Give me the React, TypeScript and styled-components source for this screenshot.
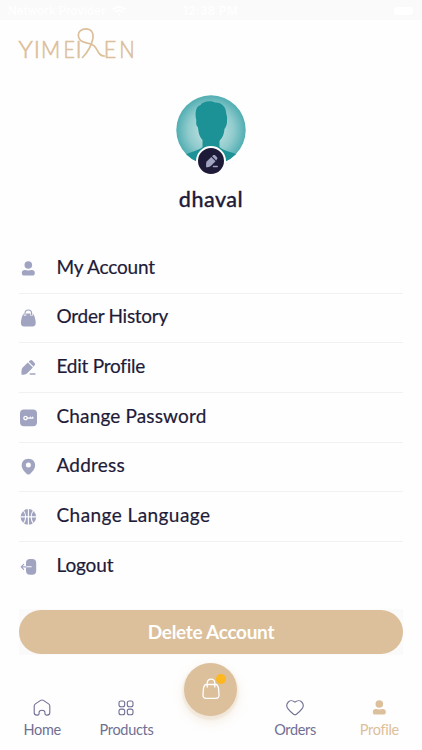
import React from 'react';
import styled, { createGlobalStyle } from 'styled-components';

const GlobalStyle = createGlobalStyle`
  * {
    box-sizing: border-box;
  }
  body {
    margin: 0;
    background: #fefefe;
    font-family: Lato, 'Liberation Sans', sans-serif;
  }
`;

const ink = '#1e1b39';
const lilac = '#a1a4c1';
const slate = '#6f6f94';
const gold = '#dcbf9b';

const Screen = styled.div`
  display: flex;
  flex-direction: column;
  width: 422px;
  height: 750px;
  overflow: hidden;
  background: #fefefe;
`;

const StatusBar = styled.div`
  display: grid;
  grid-template-columns: 1fr auto 1fr;
  align-items: center;
  height: 20px;
  padding: 2px 9px 0 8px;
  background: #fafafa;
  color: #ffffff;
  font-family: Inter, sans-serif;
  font-size: 11.5px;
  font-weight: 500;
  letter-spacing: 0.1px;
  white-space: nowrap;
`;

const Carrier = styled.div`
  display: flex;
  align-items: center;
  gap: 6px;
`;

const Clock = styled.span`
  font-weight: 600;
  letter-spacing: 0.5px;
`;

const Battery = styled.div`
  justify-self: end;
  width: 19px;
  height: 8px;
  border-radius: 3px;
  background: #ffffff;
`;

const Header = styled.header`
  height: 75px;
  padding: 4px 0 0 16px;
`;

const ProfileHead = styled.section`
  display: flex;
  flex-direction: column;
  align-items: center;
  height: 149px;
`;

const Avatar = styled.div`
  position: relative;
  width: 70px;
  height: 70px;
`;

const EditBadge = styled.button`
  position: absolute;
  left: 20px;
  top: 51px;
  display: flex;
  align-items: center;
  justify-content: center;
  width: 30px;
  height: 30px;
  padding: 0;
  border: 2px solid #ffffff;
  border-radius: 50%;
  background: ${ink};
`;

const Name = styled.h1`
  margin: 20px 0 0;
  color: ${ink};
  font-size: 21.5px;
  font-weight: 500;
  line-height: 28px;
  letter-spacing: 0.5px;
  -webkit-text-stroke: 0.3px ${ink};
`;

const Menu = styled.ul`
  margin: 0;
  padding: 0 19px;
  list-style: none;
`;

const MenuRow = styled.li`
  display: flex;
  align-items: center;
  height: 49.65px;
  border-bottom: 1px solid #f1f1f2;
  &:last-child {
    border-bottom: none;
  }
  svg {
    flex: none;
    margin: 1px 19.5px 0 0;
  }
`;

const MenuLabel = styled.span<{ spacing: number }>`
  padding-bottom: 3px;
  color: ${ink};
  font-size: 19px;
  line-height: 24px;
  letter-spacing: ${({ spacing }) => spacing}px;
  white-space: nowrap;
  -webkit-text-stroke: 0.2px ${ink};
`;

const DeleteWrap = styled.div`
  height: 46px;
  margin: 17.5px 19px 0;
  padding-top: 1px;
  background: #fafafa;
`;

const DeleteButton = styled.button`
  width: 100%;
  height: 44.5px;
  padding: 0 0 2px;
  border: none;
  border-radius: 23px;
  background: ${gold};
  color: #ffffff;
  font-family: inherit;
  font-size: 19px;
  font-weight: 700;
  letter-spacing: -0.3px;
`;

const NavBar = styled.nav`
  display: grid;
  grid-template-columns: repeat(5, 84.3px);
  flex: 1;
`;

const NavItem = styled.div<{ active?: boolean }>`
  display: flex;
  flex-direction: column;
  align-items: center;
  padding-top: 44px;
  color: ${({ active }) => (active ? gold : slate)};
`;

const NavLabel = styled.span`
  margin-top: 4px;
  font-size: 14.5px;
  line-height: 18px;
  letter-spacing: -0.32px;
`;

const CartSlot = styled.div`
  display: flex;
  justify-content: center;
  padding-top: 8px;
`;

const CartButton = styled.button`
  position: relative;
  display: flex;
  align-items: center;
  justify-content: center;
  width: 53px;
  height: 53px;
  padding: 0;
  border: none;
  border-radius: 50%;
  background: ${gold};
  box-shadow:
    0 2px 1px 2px rgba(220, 191, 155, 0.16),
    0 5px 12px rgba(220, 191, 155, 0.35);
`;

const CartDot = styled.span`
  position: absolute;
  left: 31.5px;
  top: 11px;
  width: 10px;
  height: 10px;
  border-radius: 50%;
  background: #fdb71f;
`;

const Logo = () => (
  <svg width="122" height="42" viewBox="16 24 122 42">
    <g fill={gold} stroke={gold} strokeWidth="0.6" fontFamily="Lato, sans-serif" fontSize="24" fontWeight="300">
      <text x="18.6" y="58">Y</text>
      <text x="33.800" y="58">I</text>
      <text transform="translate(41 58) scale(0.88 1)">M</text>
      <text transform="translate(63.400 58) scale(0.82 1)">E</text>
      <text x="75.400" y="58">I</text>
      <text transform="translate(103.800 58) scale(0.9 1)">E</text>
      <text transform="translate(119.300 58) scale(0.85 1)">N</text>
    </g>
    <path
      d="M82.500 57.500C87 53 91 47 92.800 39C94 32 90.500 28.800 86 28.800C81.500 28.800 78.300 31.500 78.300 35C78.300 39.500 82 42 86.500 42.800C94.500 44 96 48 98.500 52.500C100 55 101.500 56 104.500 56"
      fill="none"
      stroke={gold}
      strokeWidth="1.7"
      strokeLinecap="round"
    />
  </svg>
);

const WifiIcon = () => (
  <svg width="14" height="10" viewBox="0 0 14 10" fill="none" stroke="#fff" strokeWidth="1.7">
    <path d="M.8 3.500Q7-1.500 13.200 3.500M3.200 6Q7 2.800 10.800 6" />
    <circle cx="7" cy="8.500" r="1" fill="#fff" stroke="none" />
  </svg>
);

const AvatarPicture = () => (
  <svg width="70" height="70" viewBox="0 0 70 70">
    <defs>
      <radialGradient id="glow">
        <stop offset="0.3" stopColor="#b4dcdc" />
        <stop offset="0.65" stopColor="#90cbcd" />
        <stop offset="1" stopColor="#4fadb1" />
      </radialGradient>
      <clipPath id="round">
        <circle cx="35" cy="35" r="34.700" />
      </clipPath>
    </defs>
    <g clipPath="url(#round)">
      <rect width="70" height="70" fill="url(#glow)" />
      <path
        d="M0 70L9 60C14 57 23 55.500 26.500 52V45C23 41 22.500 37 22 32.500C20 31 20 28 20.300 25C18.500 18 20 11 24.500 10C27 6 35 5.500 39 7.500C45 7 50 12 50 17C50.500 20 51.500 22 51 25C51.500 28 50 32 48.500 34C48 40 46 43 43.500 46V52C47 56 57 57 62 60L70 70Z"
        fill="#1d9296"
      />
    </g>
  </svg>
);

const PersonIcon = ({ color = lilac }: { color?: string }) => (
  <svg width="18" height="18" viewBox="0 0 18 18" fill={color}>
    <circle cx="9.300" cy="5" r="3.800" />
    <path d="M2.800 13C2.800 10.700 4.500 9.900 6 10.100Q9.300 11 12.600 10.100C14.100 9.900 15.800 10.700 15.800 13C15.800 14.900 14.800 15.500 13.500 15.500H5.100C3.800 15.500 2.800 14.900 2.800 13Z" />
  </svg>
);

const BagIcon = () => (
  <svg width="18" height="18" viewBox="0 0 18 18" fill={lilac}>
    <path d="M4.800 4.500H13.800C15.400 5.800 16.700 11.300 16.700 14C16.700 16.300 15.600 17.500 13.500 17.500H5.100C3 17.500 1.900 16.300 1.900 14C1.900 11.300 3.200 5.800 4.800 4.500Z" />
    <path d="M6 6.800V4.500C6 2.300 7.300 1 9.300 1S12.600 2.300 12.600 4.500V6.800" fill="none" stroke="#fefefe" strokeWidth="2.400" />
    <path d="M6 6.300V4.500C6 2.300 7.300 1 9.300 1S12.600 2.300 12.600 4.500V6.300" fill="none" stroke={lilac} strokeWidth="1.200" />
  </svg>
);

const PencilIcon = ({ size = 18 }: { size?: number }) => (
  <svg width={size} height={size} viewBox="0 0 18 18" fill={lilac}>
    <path d="M8.800 3.500L13.900 8.600L8.200 14.300C6.800 15.600 4.100 15.900 2.600 15.800C2.400 14.200 2.200 11.300 3.200 9.100Z" />
    <path d="M9.700 2.700L10.900 1.600C11.700.9 12.600.9 13.300 1.600L15.600 3.900C16.300 4.600 16.300 5.400 15.600 6.100L14.700 7.700Z" />
    <rect x="10.500" y="14.200" width="6.200" height="1.600" rx="0.800" />
  </svg>
);

const KeyIcon = () => (
  <svg width="18" height="18" viewBox="0 0 18 18">
    <rect x="1" y="0.500" width="17" height="16.800" rx="4" fill={lilac} />
    <g fill="none" stroke="#fff" strokeWidth="1.300" strokeLinecap="round">
      <circle cx="6.500" cy="9.100" r="1.700" />
      <path d="M8.300 9.200H13.800V8.200M11.400 9V8.200" />
    </g>
  </svg>
);

const PinIcon = () => (
  <svg width="18" height="18" viewBox="0 0 18 18">
    <path d="M9.400 .8C13.400 .8 16.100 3.600 16.100 7.200C16.100 11 12.900 14.300 10.600 16.200Q9.400 17 8.200 16.200C5.900 14.300 2.700 11 2.700 7.200C2.700 3.600 5.400 .8 9.400 .8Z" fill={lilac} />
    <circle cx="9.400" cy="7.100" r="2.500" fill="#fefefe" />
  </svg>
);

const BallIcon = () => (
  <svg width="18" height="18" viewBox="0 0 18 18">
    <circle cx="9.400" cy="8.900" r="7.800" fill={lilac} />
    <path
      d="M9.400 1V17M1.400 8.900H17.400M4.400 2.500C7.400 6 7.400 12 4.400 15.500M14.400 2.500C11.400 6 11.400 12 14.400 15.500"
      fill="none"
      stroke="#fefefe"
      strokeWidth="1.100"
    />
  </svg>
);

const LogoutIcon = () => (
  <svg width="18" height="18" viewBox="0 0 18 18" fill="none">
    <rect x="7" y="0.900" width="10.200" height="15.800" rx="4" fill={lilac} />
    <path d="M7 8.800H12.200" stroke="#fefefe" strokeWidth="1.100" strokeLinecap="round" />
    <path d="M7 8.800H2.300M4.600 6.300L2.200 8.800L4.600 11.300" stroke={lilac} strokeWidth="1.200" strokeLinecap="round" strokeLinejoin="round" />
  </svg>
);

const HomeIcon = () => (
  <svg width="18" height="18" viewBox="0 0 18 18" fill="none" stroke="currentColor" strokeWidth="1.100" strokeLinejoin="round">
    <path d="M7.600 1.400L2.400 4.900Q1.200 5.800 1.200 7.300V13.400Q1.200 16.100 3.900 16.100H4.600Q6.100 16.100 6.100 14.600V13.300Q6.100 11.200 9 11.200T11.900 13.300V14.600Q11.900 16.100 13.400 16.100H14.100Q16.800 16.100 16.800 13.400V7.300Q16.800 5.800 15.600 4.900L10.400 1.400Q9 .5 7.600 1.400Z" />
  </svg>
);

const GridIcon = () => (
  <svg width="18" height="18" viewBox="0 0 18 18" fill="none" stroke="currentColor" strokeWidth="1.100">
    <rect x="2" y="2" width="5.700" height="5.700" rx="2" />
    <rect x="10.300" y="2" width="5.700" height="5.700" rx="2" />
    <rect x="2" y="10.100" width="5.700" height="5.700" rx="2" />
    <rect x="10.300" y="10.100" width="5.700" height="5.700" rx="2" />
  </svg>
);

const HeartIcon = () => (
  <svg width="18" height="18" viewBox="0 0 18 18" fill="none" stroke="currentColor" strokeWidth="1.100">
    <path d="M9 3.200C6.900 1.200 4 1.300 2.300 3C.5 4.900.5 7.700 1.900 9.600C3.600 11.900 5.500 13.600 7.600 15.300Q9 16.300 10.400 15.300C12.500 13.600 14.400 11.900 16.100 9.600C17.500 7.700 17.500 4.900 15.700 3C14 1.300 11.100 1.200 9 3.200Z" />
  </svg>
);

const CartIcon = () => (
  <svg width="20" height="22" viewBox="0 0 20 22" fill="none" stroke="#fff" strokeWidth="1.300" strokeLinecap="round">
    <path d="M5.200 6.500H14.800C16.800 6.500 17.200 8.500 17.600 11L18 16.500C18.200 19 17 20.300 15 20.300H5C3 20.300 1.800 19 2 16.500L2.400 11C2.800 8.500 3.200 6.500 5.200 6.500Z" />
    <path d="M6.200 9V5.300C6.200 2.600 7.600 1.200 10 1.200S13.800 2.600 13.800 5.300V9" />
  </svg>
);

const menu = [
  { label: 'My Account', icon: <PersonIcon />, spacing: -0.15 },
  { label: 'Order History', icon: <BagIcon />, spacing: -0.27 },
  { label: 'Edit Profile', icon: <PencilIcon />, spacing: -0.25 },
  { label: 'Change Password', icon: <KeyIcon />, spacing: 0.15 },
  { label: 'Address', icon: <PinIcon />, spacing: 0.2 },
  { label: 'Change Language', icon: <BallIcon />, spacing: 0.43 },
  { label: 'Logout', icon: <LogoutIcon />, spacing: -0.15 },
];

const App = () => (
  <Screen>
    <GlobalStyle />
    <StatusBar>
      <Carrier>
        <span>Network Provider</span>
        <WifiIcon />
      </Carrier>
      <Clock>12:38 PM</Clock>
      <Battery />
    </StatusBar>
    <Header>
      <Logo />
    </Header>
    <ProfileHead>
      <Avatar>
        <AvatarPicture />
        <EditBadge>
          <PencilIcon size={15} />
        </EditBadge>
      </Avatar>
      <Name>dhaval</Name>
    </ProfileHead>
    <Menu>
      {menu.map(({ label, icon, spacing }) => (
        <MenuRow key={label}>
          {icon}
          <MenuLabel spacing={spacing}>{label}</MenuLabel>
        </MenuRow>
      ))}
    </Menu>
    <DeleteWrap>
      <DeleteButton>Delete Account</DeleteButton>
    </DeleteWrap>
    <NavBar>
      <NavItem>
        <HomeIcon />
        <NavLabel>Home</NavLabel>
      </NavItem>
      <NavItem>
        <GridIcon />
        <NavLabel>Products</NavLabel>
      </NavItem>
      <CartSlot>
        <CartButton>
          <CartIcon />
          <CartDot />
        </CartButton>
      </CartSlot>
      <NavItem>
        <HeartIcon />
        <NavLabel>Orders</NavLabel>
      </NavItem>
      <NavItem active>
        <PersonIcon color={gold} />
        <NavLabel>Profile</NavLabel>
      </NavItem>
    </NavBar>
  </Screen>
);

export default App;
